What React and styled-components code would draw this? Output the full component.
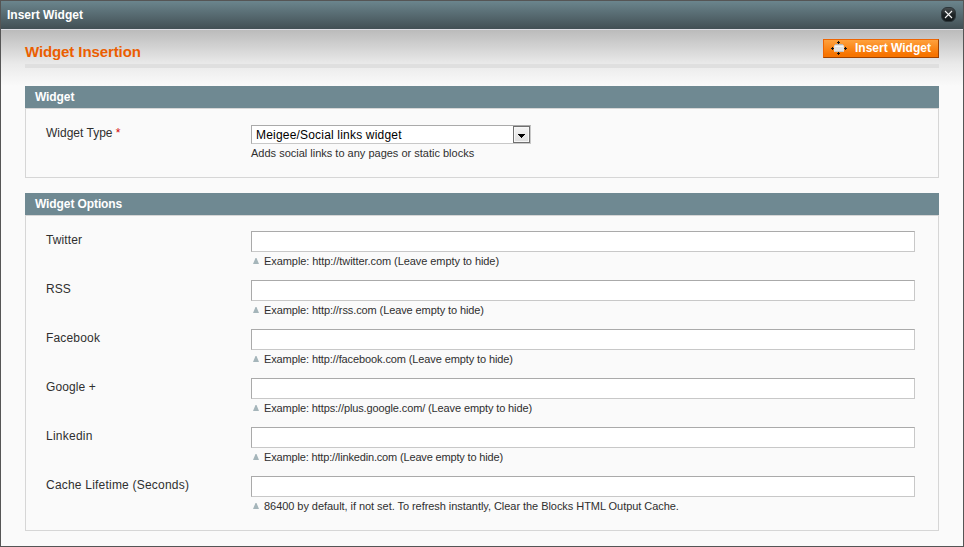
import React from 'react';
import styled, { createGlobalStyle } from 'styled-components';

const Global = createGlobalStyle`
  * { box-sizing: border-box; }
  body { margin: 0; font-family: "Liberation Sans", Arial, sans-serif; font-size: 12px; color: #2f2f2f; }
`;

const Dialog = styled.div`
  width: 964px;
  height: 547px;
  border: 1px solid #555;
  background: #fafafa;
  display: flex;
  flex-direction: column;
  overflow: hidden;
`;

const TitleBar = styled.header`
  flex: none;
  height: 29px;
  padding: 0 7px 0 6px;
  display: flex;
  align-items: center;
  justify-content: space-between;
  border-bottom: 1px solid #dedee4;
  background: linear-gradient(#6b858d, #424f54);
  color: #fff;
  font-weight: bold;
  line-height: 14px;
`;

const CloseButton = styled.button`
  width: 15px;
  height: 15px;
  margin-bottom: 1px;
  padding: 0;
  border: 0;
  background: none;
  display: flex;
`;

const Body = styled.main`
  flex: 1;
  padding: 0 24px;
  background: linear-gradient(#bbb, #eaeaea 34px, #fafafa 56px);
`;

const ContentHeader = styled.div`
  height: 38px;
  padding-top: 9px;
  display: flex;
  justify-content: space-between;
  align-items: flex-start;
  border-bottom: 4px solid #dfdfdf;
  margin-bottom: 18px;
`;

const Heading = styled.h1`
  margin: 4px 0 0;
  color: #eb5e00;
  font-size: 15px;
  line-height: 18px;
  letter-spacing: -0.1px;
`;

const InsertButton = styled.button`
  width: 116px;
  height: 19px;
  padding: 0 0 1px 7px;
  display: flex;
  align-items: center;
  gap: 8px;
  border: 1px solid;
  border-color: #ed6502 #a04300 #a04300 #ed6502;
  background: linear-gradient(#ffa13d, #f77400 85%);
  color: #fff;
  font: bold 12px/16px "Liberation Sans", Arial, sans-serif;
  white-space: nowrap;
`;

const Section = styled.section`
  margin-bottom: 15px;
`;

const SectionTitle = styled.h2`
  height: 22px;
  margin: 0;
  padding-left: 10px;
  background: #6f8992;
  color: #fff;
  font-size: 12px;
  line-height: 22px;
  letter-spacing: -0.1px;
`;

const Fieldset = styled.div`
  height: ${(p) => p.$height}px;
  padding: 15px 23px 0 20px;
  border: 1px solid #d6d6d6;
`;

const Row = styled.div`
  height: 49px;
  display: grid;
  grid-template-columns: 205px 1fr;
`;

const Label = styled.label`
  padding-top: 2px;
  line-height: 14px;
  letter-spacing: ${(p) => p.$spacing || 0}px;
`;

const Required = styled.span`
  color: #d40707;
`;

const Input = styled.input`
  display: block;
  width: 100%;
  height: 21px;
  padding: 2px;
  border: 1px solid;
  border-color: #aaa #c8c8c8 #c8c8c8 #aaa;
  background: #fff;
  outline: none;
`;

const Select = styled.div`
  width: 280px;
  height: 19px;
  margin-top: 1px;
  padding-left: 4px;
  display: flex;
  justify-content: space-between;
  border: 1px solid;
  border-color: #aaa #c8c8c8 #c8c8c8 #aaa;
  background: #fff;
  color: #000;
  line-height: 18px;
  letter-spacing: 0.19px;
`;

const SelectArrow = styled.span`
  width: 17px;
  height: 17px;
  border: 1px solid #707070;
  background: linear-gradient(#f4f4f4, #ddd);
  box-shadow: inset 0 0 0 1px #f7f7f7;
  display: flex;
`;

const Note = styled.p`
  margin: 3px 0 0;
  display: flex;
  align-items: center;
  font-size: 11px;
  line-height: 13px;
  letter-spacing: ${(p) => p.$spacing || 0}px;
  white-space: nowrap;
`;

const Marker = styled.svg`
  flex: none;
  margin: 0 5px 1px 2px;
`;

const CloseIcon = () => (
  <svg width="15" height="15" viewBox="0 0 15 15">
    <defs>
      <linearGradient id="closeFill" x1="0" y1="0" x2="0" y2="1">
        <stop offset="0" stopColor="#4a4f51" />
        <stop offset=".5" stopColor="#1e2426" />
        <stop offset="1" stopColor="#111719" />
      </linearGradient>
    </defs>
    <rect x=".5" y=".5" width="14" height="14" rx="5.5" fill="url(#closeFill)" stroke="#2c363a" />
    <path d="M4 4l7 7M11 4l-7 7" stroke="#f4f4f4" strokeWidth="1.1" />
  </svg>
);

const InsertIcon = () => (
  <svg width="16" height="14" viewBox="0 0 16 14">
    <path d="M7 0h1v1h1v1H8v1H7V2H6V1h1zM7 14h1v-1h1v-1H8v-1H7v1H6v1h1zM0 7h1V6h1v1h1v1H2v1H1V8H0zM16 7h-1V6h-1v1h-1v1h1v1h1V8h1z" fill="#141414" />
    <rect x="3" y="4" width="10" height="7" rx="1" fill="#e2e2e2" />
    <path d="M4 3h8v1H4z" fill="#b5b5b5" />
    <path d="M4 5.500h8" stroke="#f4f4f4" />
    <path d="M4 10.500h8" stroke="#c4c4c4" />
  </svg>
);

const ArrowIcon = () => (
  <svg width="15" height="15" viewBox="0 0 15 15" shapeRendering="crispEdges">
    <path d="M4 7h7v1h-1v1H9v1H8v1H7v-1H6V9H5V8H4z" fill="#000" />
  </svg>
);

const options = [
  { label: 'Twitter', tracking: 0.12, note: 'Example: http://twitter.com (Leave empty to hide)', noteTracking: -0.07 },
  { label: 'RSS', tracking: 0, note: 'Example: http://rss.com (Leave empty to hide)', noteTracking: -0.1 },
  { label: 'Facebook', tracking: 0.17, note: 'Example: http://facebook.com (Leave empty to hide)', noteTracking: -0.11 },
  { label: 'Google +', tracking: 0.12, note: 'Example: https://plus.google.com/ (Leave empty to hide)', noteTracking: -0.12 },
  { label: 'Linkedin', tracking: 0.25, note: 'Example: http://linkedin.com (Leave empty to hide)', noteTracking: -0.16 },
  { label: 'Cache Lifetime (Seconds)', tracking: 0.21, note: '86400 by default, if not set. To refresh instantly, Clear the Blocks HTML Output Cache.', noteTracking: -0.05 },
];

export default function App() {
  return (
    <>
      <Global />
      <Dialog>
        <TitleBar>
          <span>Insert Widget</span>
          <CloseButton aria-label="Close"><CloseIcon /></CloseButton>
        </TitleBar>
        <Body>
          <ContentHeader>
            <Heading>Widget Insertion</Heading>
            <InsertButton><InsertIcon /><span>Insert Widget</span></InsertButton>
          </ContentHeader>
          <Section>
            <SectionTitle>Widget</SectionTitle>
            <Fieldset $height={70}>
              <Row>
                <Label>Widget Type <Required>*</Required></Label>
                <div>
                  <Select>
                    <span>Meigee/Social links widget</span>
                    <SelectArrow><ArrowIcon /></SelectArrow>
                  </Select>
                  <Note>Adds social links to any pages or static blocks</Note>
                </div>
              </Row>
            </Fieldset>
          </Section>
          <Section>
            <SectionTitle>Widget Options</SectionTitle>
            <Fieldset $height={316}>
              {options.map(({ label, tracking, note, noteTracking }) => (
                <Row key={label}>
                  <Label $spacing={tracking}>{label}</Label>
                  <div>
                    <Input aria-label={label} />
                    <Note $spacing={noteTracking}>
                      <Marker width="6" height="6" viewBox="0 0 6 6"><path d="M2.500 0h1L6 6H0z" fill="#a5b5ba" /></Marker>
                      <span>{note}</span>
                    </Note>
                  </div>
                </Row>
              ))}
            </Fieldset>
          </Section>
        </Body>
      </Dialog>
    </>
  );
}
